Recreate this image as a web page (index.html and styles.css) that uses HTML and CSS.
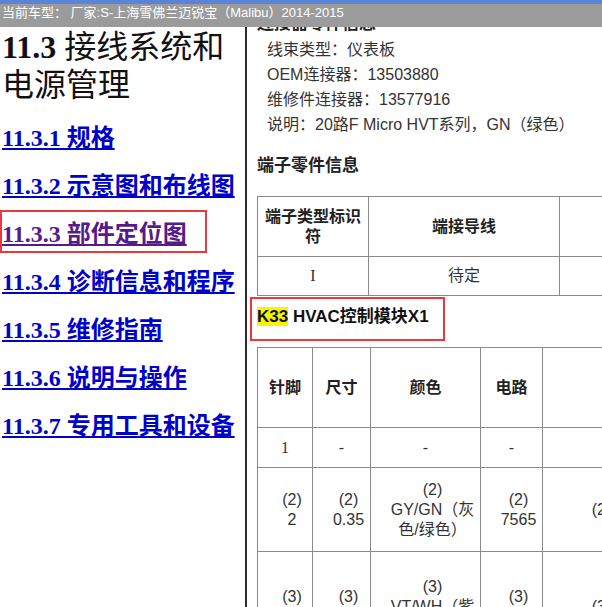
FILE: index.html
```html
<!DOCTYPE html>
<html lang="zh-CN">
<head>
  <meta charset="UTF-8">
  <title>11.3 接线系统和电源管理</title>
  <link rel="stylesheet" href="styles.css">
</head>
<body>

  <!-- 当前车型条 -->
  <div class="car-bar">当前车型： 厂家:S-上海雪佛兰迈锐宝（Malibu）2014-2015</div>

  <div class="frames">
    <!-- 左侧目录 -->
    <div class="toc">
      <h1><b>11.3</b> <span class="cn">接线系统和电源管理</span></h1>
      <a href="#" class="toc-link">11.3.1 规格</a>
      <a href="#" class="toc-link">11.3.2 示意图和布线图</a>
      <a href="#" class="toc-link visited marked">11.3.3 部件定位图</a>
      <a href="#" class="toc-link">11.3.4 诊断信息和程序</a>
      <a href="#" class="toc-link">11.3.5 维修指南</a>
      <a href="#" class="toc-link">11.3.6 说明与操作</a>
      <a href="#" class="toc-link">11.3.7 专用工具和设备</a>
    </div>

    <!-- 右侧连接器详情 -->
    <div class="detail">
      <div class="detail-scroll">
        <h4 class="sec-title">连接器零件信息</h4>
        <div class="info">
          <p>线束类型：仪表板</p>
          <p>OEM连接器：13503880</p>
          <p>维修件连接器：13577916</p>
          <p>说明：20路F Micro HVT系列，GN（绿色）</p>
        </div>

        <h4 class="sec-title">端子零件信息</h4>
        <table class="grid terminal">
          <colgroup>
            <col style="width: 111px">
            <col style="width: 191px">
            <col style="width: 200px">
          </colgroup>
          <tr class="h60">
            <th>端子类型标识符</th>
            <th>端接导线</th>
            <th></th>
          </tr>
          <tr class="h39">
            <td><span class="serif">I</span></td>
            <td>待定</td>
            <td></td>
          </tr>
        </table>

        <div class="conn-title"><span class="hl">K33</span> HVAC控制模块X1</div>

        <table class="grid pins">
          <colgroup>
            <col style="width: 55px">
            <col style="width: 58px">
            <col style="width: 110px">
            <col style="width: 62px">
            <col style="width: 104px">
            <col style="width: 110px">
          </colgroup>
          <tr class="h80">
            <th>针脚</th>
            <th>尺寸</th>
            <th>颜色</th>
            <th>电路</th>
            <th></th>
            <th></th>
          </tr>
          <tr class="h40">
            <td><span class="serif">1</span></td>
            <td>-</td>
            <td>-</td>
            <td>-</td>
            <td></td>
            <td></td>
          </tr>
          <tr class="h84 multi">
            <td>(2)<br>2</td>
            <td>(2)<br>0.35</td>
            <td>(2)<br>GY/GN（灰色/绿色）</td>
            <td>(2)<br>7565</td>
            <td>(2)</td>
            <td></td>
          </tr>
          <tr class="h110 multi">
            <td>(3)<br>3</td>
            <td>(3)<br>0.35</td>
            <td>(3)<br>VT/WH（紫色/白色）</td>
            <td>(3)<br>7566</td>
            <td>(3)</td>
            <td></td>
          </tr>
        </table>
      </div>
    </div>
  </div>

</body>
</html>
```

FILE: styles.css
```css
body {
  margin: 0;
  padding-top: 27px;
  background-color: #ffffff;
  font-family: "Liberation Sans", "Noto Sans CJK SC", sans-serif;
  color: #222;
}

/* 顶部车型条 */
.car-bar {
  position: fixed;
  top: 0;
  left: 0;
  right: 0;
  height: 23px;
  border-top: 4px solid #5a84d8;
  background-color: #9b9b9b;
  color: #ffffff;
  font-size: 13px;
  line-height: 17px;
  padding-left: 2px;
  white-space: nowrap;
  z-index: 2;
}

.frames {
  display: flex;
  height: 580px;
}

/* 左侧目录 */
.toc {
  width: 245px;
  flex: none;
  padding-left: 2px;
  box-sizing: border-box;
}

.toc h1 {
  margin: 1px 0 1px;
  font-family: "Liberation Serif", "Noto Sans CJK SC", serif;
  font-size: 32px;
  line-height: 38px;
  font-weight: bold;
  color: #111;
}

.toc h1 .cn {
  font-weight: normal;
}

.toc-link {
  display: block;
  width: fit-content;
  margin-top: 20px;
  font-family: "Liberation Serif", "Noto Sans CJK SC", serif;
  font-size: 24px;
  line-height: 28px;
  font-weight: bold;
  color: #0000cc;
  text-decoration: underline;
  text-underline-offset: 2px;
}

.toc-link.visited {
  color: #551a8b;
}

/* 红框标注 */
.marked {
  position: relative;
}

.marked::after {
  content: "";
  position: absolute;
  left: -2px;
  top: -10px;
  width: 207px;
  height: 43px;
  border: 2px solid #e53b3f;
  box-sizing: border-box;
}

/* 右侧详情 */
.detail {
  flex: 1;
  min-width: 0;
  border-left: 2px solid #2a2a2a;
  overflow: hidden;
}

.detail-scroll {
  margin-top: -16px;
}

.sec-title {
  margin: 0;
  padding-left: 10px;
  font-size: 17px;
  line-height: 26px;
  font-weight: bold;
  color: #222;
}

.info {
  padding-left: 20px;
  font-size: 16px;
  line-height: 25px;
  color: #333;
}

.info p {
  margin: 0;
}

.info + .sec-title {
  margin-top: 16px;
}

.grid {
  border-collapse: collapse;
  table-layout: fixed;
  margin-left: 10px;
  font-size: 16px;
  color: #333;
}

.grid th,
.grid td {
  border: 1px solid #8a8a8a;
  text-align: center;
  vertical-align: middle;
  padding: 0 4px;
  line-height: 20px;
}

.grid th {
  font-weight: bold;
  color: #222;
}

.grid .multi td {
  padding: 0 4px 0 18px;
}

.serif {
  font-family: "Liberation Serif", serif;
}

.terminal {
  width: 502px;
  margin-top: 17px;
}

.pins {
  width: 499px;
  margin-top: 6px;
}

.h39 { height: 39px; }
.h40 { height: 40px; }
.h60 { height: 60px; }
.h80 { height: 80px; }
.h84 { height: 84px; }
.h110 { height: 110px; }

.conn-title {
  width: 195px;
  box-sizing: border-box;
  margin: 1px 0 0 3px;
  border: 2px solid #e53b3f;
  padding: 5px 0 9px 5px;
  font-size: 17px;
  line-height: 26px;
  font-weight: bold;
  color: #111;
}

.hl {
  background-color: #f6f600;
}
```
